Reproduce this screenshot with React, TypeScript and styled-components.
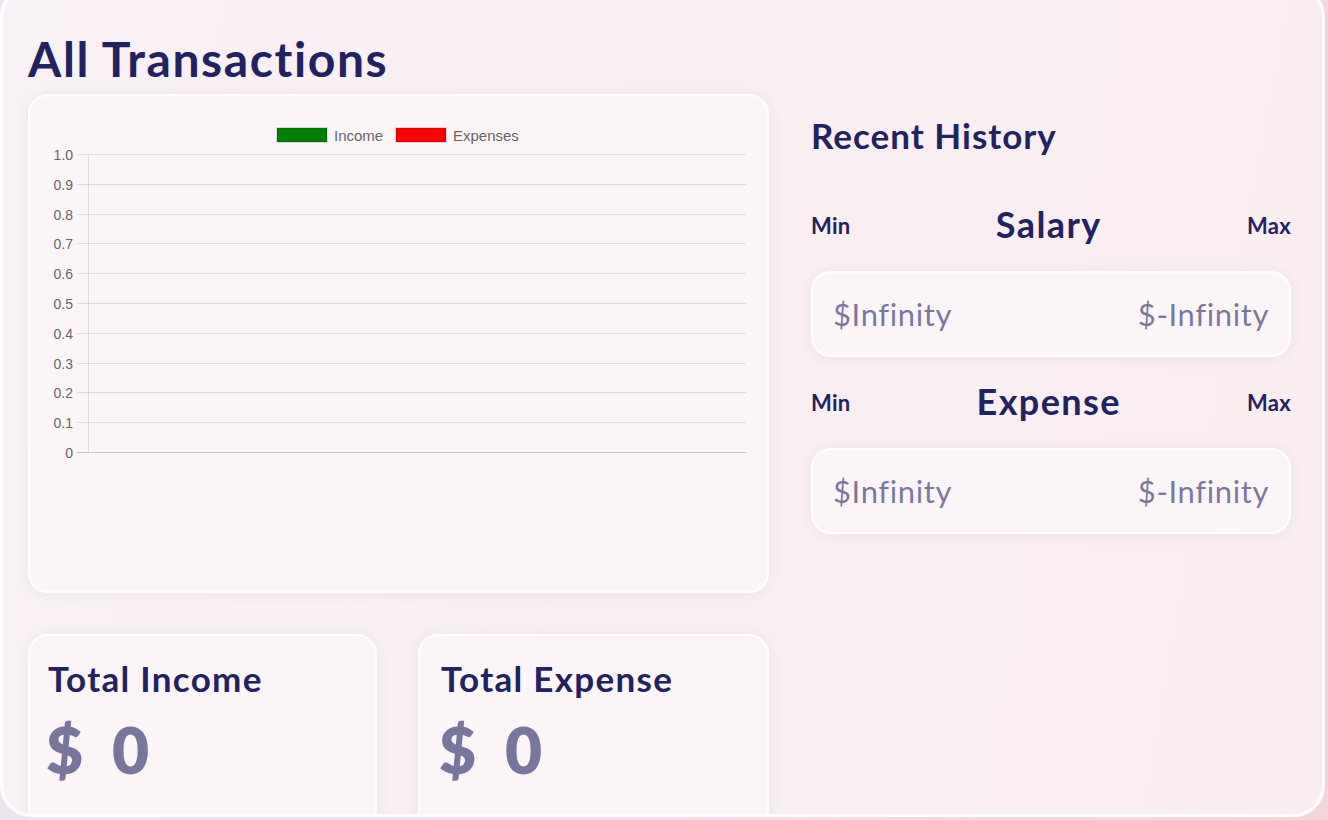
import React from "react";
import styled, { createGlobalStyle } from "styled-components";

const GlobalStyle = createGlobalStyle`
  html, body { margin: 0; padding: 0; }
  body {
    width: 1328px;
    height: 820px;
    overflow: hidden;
    font-family: "Lato", "Noto Sans", sans-serif;
    background: linear-gradient(90deg, #ebe4f0 0%, #efdfe8 50%, #f1d5db 100%);
    color: #222260;
  }
`;

const Panel = styled.main`
  box-sizing: border-box;
  width: 1325px;
  height: 832px;
  margin-top: -15px;
  border: 3px solid #ffffff;
  border-radius: 32px;
  background: linear-gradient(100deg, #f8f1f5 0%, #f9eff3 45%, #f9edf0 100%);
  overflow: hidden;
  padding: 42px 31px 0 25px;
`;

const Title = styled.h1`
  margin: 0 0 6px 0;
  height: 58px;
  font-size: 48px;
  line-height: 58px;
  font-weight: 700;
  letter-spacing: 1.6px;
  color: #222260;
`;

const StatsGrid = styled.div`
  display: grid;
  grid-template-columns: repeat(5, 219px);
  column-gap: 42px;
`;

const LeftCol = styled.div`
  grid-column: 1 / 4;
  display: flex;
  flex-direction: column;
  gap: 41px;
`;

const RightCol = styled.div`
  grid-column: 4 / 6;
  display: flex;
  flex-direction: column;
`;

const Card = styled.div`
  box-sizing: border-box;
  background: #fbf5f8;
  border: 2px solid #ffffff;
  box-shadow: 0px 1px 15px rgba(0, 0, 0, 0.06);
  border-radius: 20px;
`;

const ChartCard = styled(Card)`
  height: 499px;
  padding: 22px 21px 0 18px;
`;

const AmountGrid = styled.div`
  display: grid;
  grid-template-columns: 349px 351px;
  column-gap: 41px;
`;

const AmountCard = styled(Card)<{ $inset?: number }>`
  height: 220px;
  padding: 20px 18px 0 ${(p) => p.$inset ?? 18}px;
`;

const AmountTitle = styled.h2`
  margin: 0;
  font-size: 35px;
  line-height: 44px;
  font-weight: 700;
  letter-spacing: 1.3px;
  color: #222260;
`;

const AmountValue = styled.p`
  margin: 16px 0 0 -2px;
  font-size: 64px;
  line-height: 68px;
  font-weight: 800;
  letter-spacing: 7px;
  color: rgba(34, 34, 96, 0.6);
`;

const HistoryTitle = styled.h2`
  margin: 19px 0 0 0;
  height: 44px;
  font-size: 35px;
  line-height: 44px;
  font-weight: 700;
  letter-spacing: 1px;
  color: #222260;
`;

const RangeHead = styled.div<{ $first?: boolean }>`
  display: flex;
  align-items: center;
  justify-content: space-between;
  height: 50px;
  margin-top: ${(p) => (p.$first ? "43px" : "20px")};
`;

const RangeEnd = styled.p`
  margin: 0;
  font-size: 22px;
  font-weight: 700;
  letter-spacing: 0.3px;
  color: #222260;
`;

const RangeName = styled.h2`
  margin: 0 0 3px 0;
  font-size: 36px;
  font-weight: 700;
  letter-spacing: 1.4px;
  color: #222260;
`;

const RangeBox = styled(Card)`
  margin-top: 21px;
  height: 86px;
  display: flex;
  align-items: center;
  justify-content: space-between;
  padding: 0 20px;
`;

const RangeValue = styled.p`
  margin: 0;
  font-size: 31px;
  font-weight: 400;
  letter-spacing: 0.6px;
  color: rgba(34, 34, 96, 0.6);
`;

const ticks = ["1.0", "0.9", "0.8", "0.7", "0.6", "0.5", "0.4", "0.3", "0.2", "0.1", "0"];

const Chart: React.FC = () => {
  const yAt = (i: number) => Math.round(36 + i * 29.8) + 0.5;
  return (
    <svg width={698} height={349} viewBox="0 0 698 349">
      <g fontFamily="'Liberation Sans', Arial, sans-serif">
        <rect x={229} y={10} width={50} height={14} fill="#008000" stroke="rgba(0,0,0,0.12)" strokeWidth={2} />
        <text x={286} y={17.5} fontSize={15} fill="#666" dominantBaseline="central">Income</text>
        <rect x={348} y={10} width={50} height={14} fill="#ff0000" stroke="rgba(0,0,0,0.12)" strokeWidth={2} />
        <text x={405} y={17.5} fontSize={15} fill="#666" dominantBaseline="central">Expenses</text>
        {ticks.map((t, i) => (
          <g key={t}>
            <line
              x1={29}
              x2={698}
              y1={yAt(i)}
              y2={yAt(i)}
              stroke={i === ticks.length - 1 ? "rgba(0,0,0,0.2)" : "rgba(0,0,0,0.1)"}
              strokeWidth={1}
            />
            <text x={25} y={yAt(i) + 0.5} fontSize={14} fill="#666" textAnchor="end" dominantBaseline="central">
              {t}
            </text>
          </g>
        ))}
        <line x1={40.5} x2={40.5} y1={yAt(0)} y2={yAt(10)} stroke="rgba(0,0,0,0.1)" strokeWidth={1} />
      </g>
    </svg>
  );
};

const RangeSection: React.FC<{ name: string; first?: boolean }> = ({ name, first }) => (
  <>
    <RangeHead $first={first}>
      <RangeEnd>Min</RangeEnd>
      <RangeName>{name}</RangeName>
      <RangeEnd>Max</RangeEnd>
    </RangeHead>
    <RangeBox>
      <RangeValue>$Infinity</RangeValue>
      <RangeValue>$-Infinity</RangeValue>
    </RangeBox>
  </>
);

export default function App() {
  return (
    <>
      <GlobalStyle />
      <Panel>
        <Title>All Transactions</Title>
        <StatsGrid>
          <LeftCol>
            <ChartCard>
              <Chart />
            </ChartCard>
            <AmountGrid>
              <AmountCard>
                <AmountTitle>Total Income</AmountTitle>
                <AmountValue>$ 0</AmountValue>
              </AmountCard>
              <AmountCard $inset={21}>
                <AmountTitle>Total Expense</AmountTitle>
                <AmountValue>$ 0</AmountValue>
              </AmountCard>
            </AmountGrid>
          </LeftCol>
          <RightCol>
            <HistoryTitle>Recent History</HistoryTitle>
            <RangeSection name="Salary" first />
            <RangeSection name="Expense" />
          </RightCol>
        </StatsGrid>
      </Panel>
    </>
  );
}
